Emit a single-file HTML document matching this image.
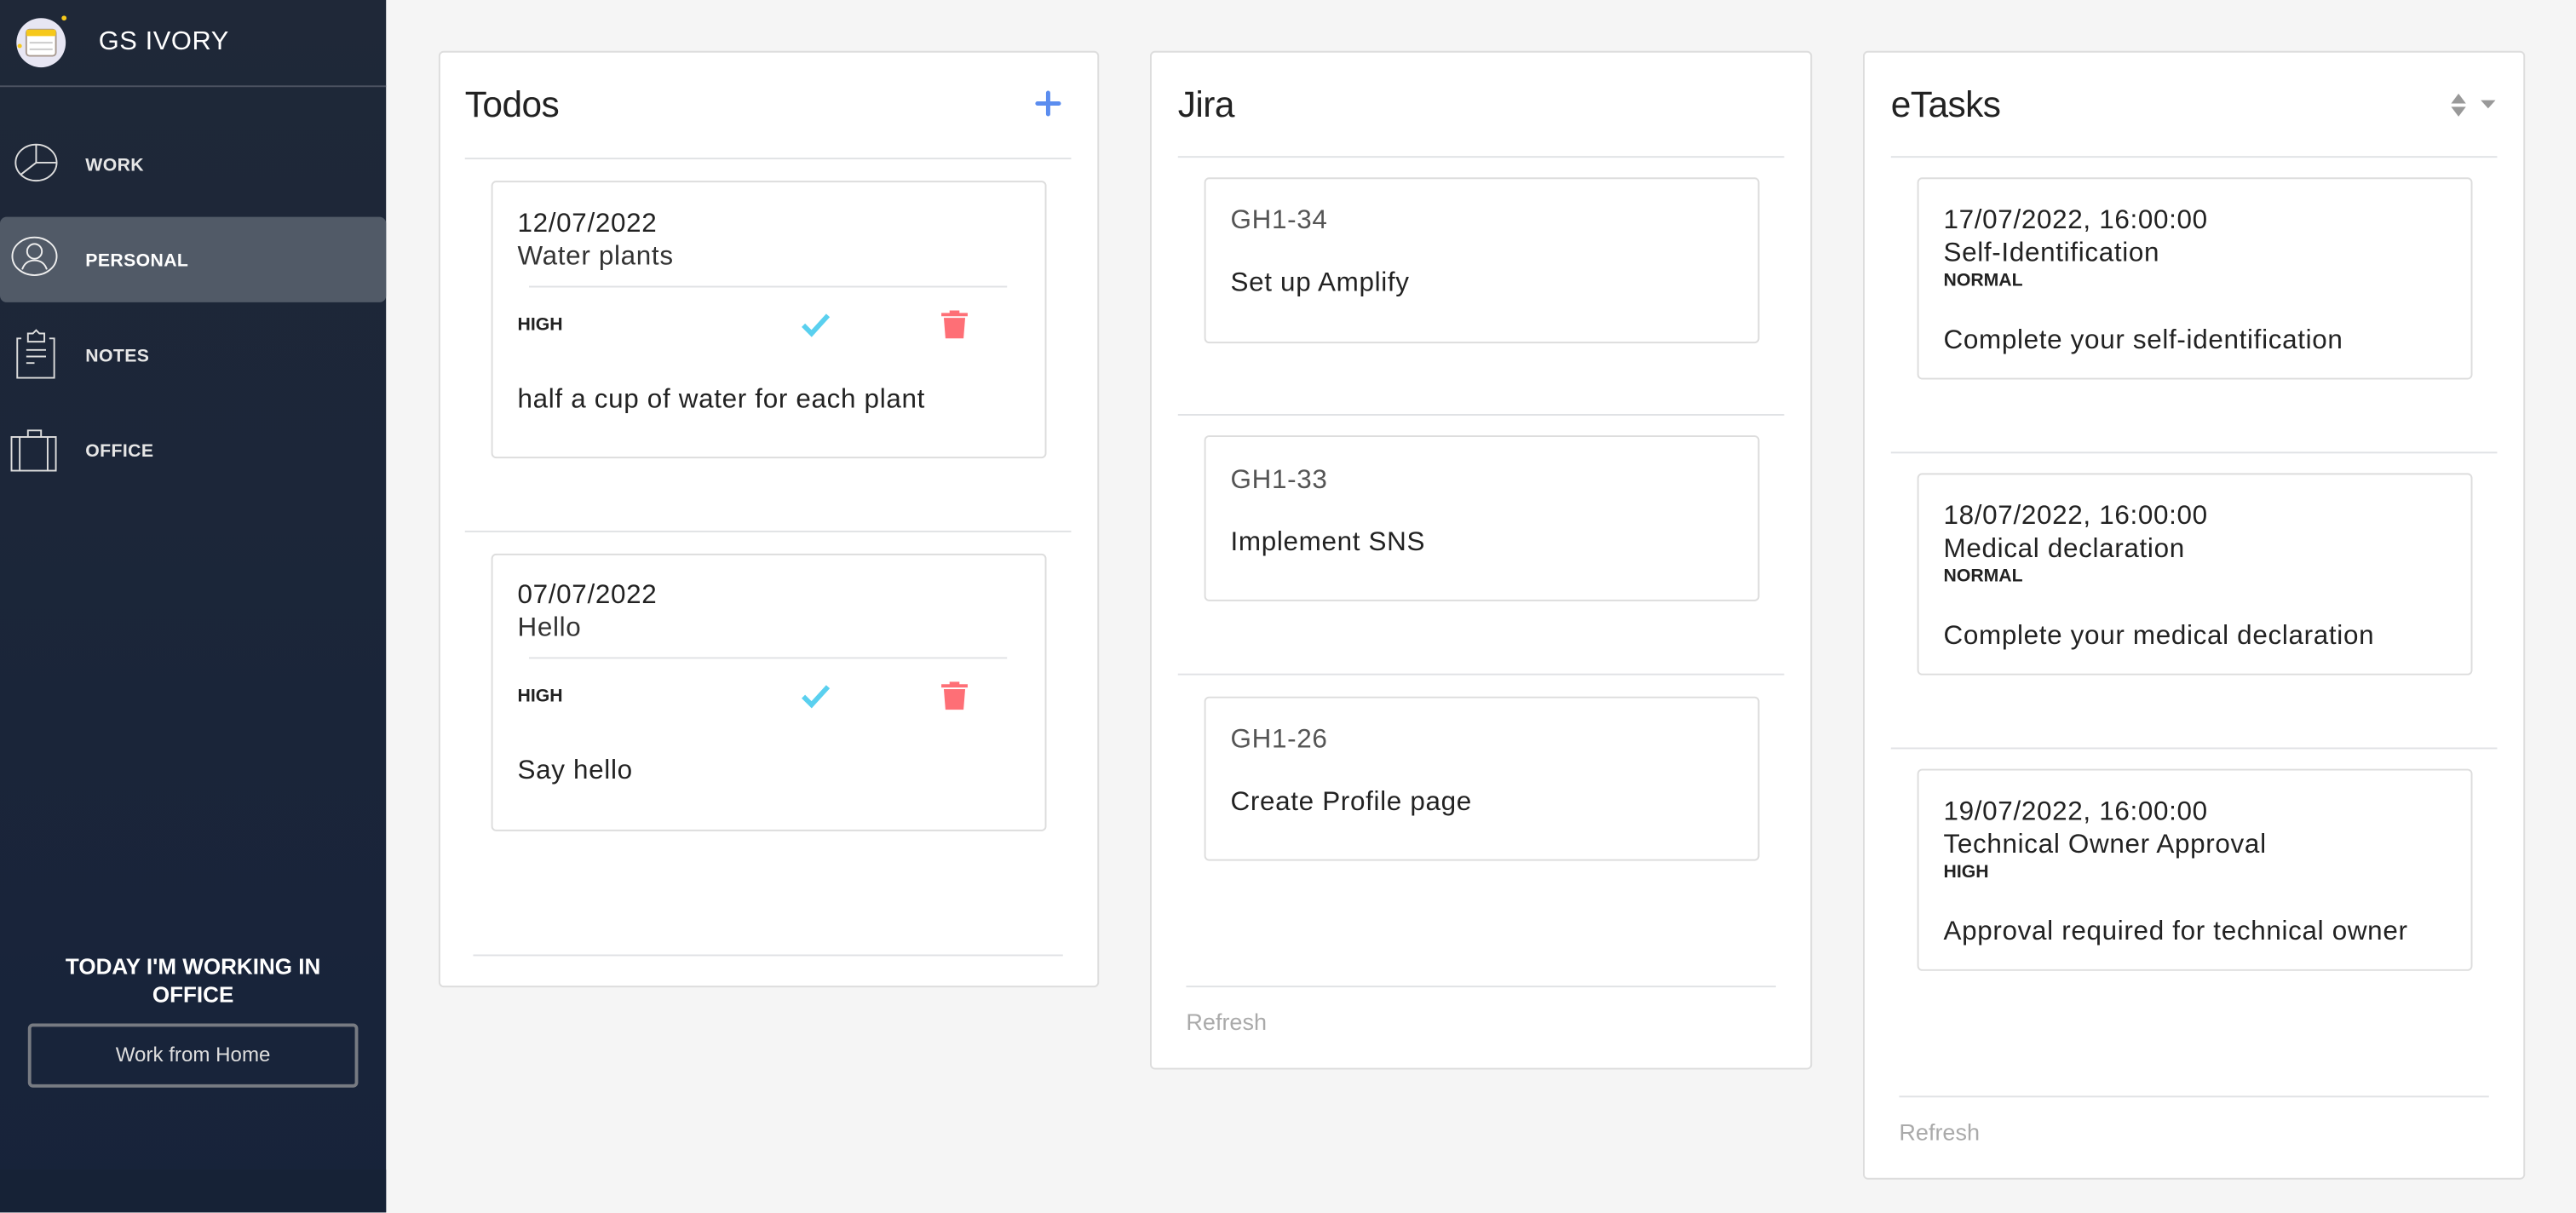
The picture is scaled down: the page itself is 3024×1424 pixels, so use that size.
<!DOCTYPE html>
<html><head><meta charset="utf-8"><style>
*{margin:0;padding:0;box-sizing:border-box}
html,body{width:3024px;height:1424px;overflow:hidden;background:#f5f5f5;font-family:"Liberation Sans",sans-serif}
#w{position:absolute;left:0;top:0;width:1568px;height:738px;transform:scale(1.92857);transform-origin:0 0}
.a{position:absolute}
.sb{left:0;top:0;width:235px;height:738px;background:linear-gradient(#1f2838,#17233a)}
.nav{left:52px;color:#e6e6e6;font-weight:bold;font-size:11px;letter-spacing:.2px}
.col{background:#fff;border:1px solid #ddd;border-radius:3px}
.tt{font-size:22px;color:#222;font-weight:300;letter-spacing:-.3px}
.hl{height:1px;background:#e0e2e5}
.card{background:#fff;border:1px solid #ddd;border-radius:3px}
.t16{font-size:16.3px;color:#222;letter-spacing:.35px;line-height:19px}
.lt{color:#333}
.b11{font-size:11px;font-weight:bold;color:#222}
.ref{font-size:14px;color:#aaa}
</style></head><body><div id="w">
<div class="a sb"></div>
<svg class="a" style="left:8px;top:8px" width="36" height="36" viewBox="0 0 36 36"><circle cx="17" cy="18" r="15" fill="#e7e6f3"/><rect x="8" y="10" width="18" height="16" rx="2" fill="#fff" stroke="#a89a90"/><rect x="8" y="10" width="18" height="4" rx="1" fill="#f6c81a"/><line x1="10" y1="18" x2="24" y2="18" stroke="#ccc"/><line x1="10" y1="22" x2="24" y2="22" stroke="#ccc"/><circle cx="31" cy="3" r="1.5" fill="#f6c81a"/><circle cx="4" cy="20" r="1.3" fill="#f6c81a"/></svg>
<div class="a" style="left:60px;top:17px;color:#fff;font-size:16px;letter-spacing:.3px">GS IVORY</div>
<div class="a" style="left:0;top:52px;width:235px;height:1px;background:#4c5361"></div>
<svg class="a" style="left:7px;top:84px" width="30" height="30" viewBox="0 0 30 30" fill="none" stroke="#ddd" stroke-width="1"><ellipse cx="15" cy="15" rx="12.5" ry="11"/><path d="M15 4V15H27M15 15L6 22"/></svg>
<div class="a nav" style="top:95px">WORK</div>
<div class="a" style="left:0;top:132px;width:235px;height:52px;background:#515a67;border-radius:4px"></div>
<svg class="a" style="left:6px;top:141px" width="30" height="30" viewBox="0 0 30 30" fill="none" stroke="#eee" stroke-width="1"><ellipse cx="15" cy="15" rx="13.5" ry="11.5"/><circle cx="15" cy="12" r="4.5"/><path d="M7.5 23C9 18.5 12 17.5 15 17.5S21 18.5 22.5 23"/></svg>
<div class="a nav" style="top:153px;color:#fff">PERSONAL</div>
<svg class="a" style="left:9px;top:199px" width="26" height="32" viewBox="0 0 26 32" fill="none" stroke="#ddd" stroke-width="1"><path d="M4 7H1.5V31H24V7H21"/><path d="M8 9V4H11L13 2L15 4H18V9Z"/><path d="M7 14H19M7 18H19M7 22H12"/></svg>
<div class="a nav" style="top:211px">NOTES</div>
<svg class="a" style="left:6px;top:259px" width="30" height="30" viewBox="0 0 30 30" fill="none" stroke="#ddd" stroke-width="1"><rect x="1" y="7" width="27" height="20.5"/><path d="M11 7V3H19V7M6 7V27.5M23 7V27.5"/></svg>
<div class="a nav" style="top:269px">OFFICE</div>
<div class="a" style="left:0;top:580px;width:235px;text-align:center;color:#fff;font-weight:bold;font-size:13.5px;line-height:17px">TODAY I'M WORKING IN<br>OFFICE</div>
<div class="a" style="left:17px;top:623px;width:201px;height:39px;border:2px solid #777b82;border-radius:3px;color:#ddd;font-size:12.5px;text-align:center;line-height:35px">Work from Home</div>
<div class="a" style="left:0;top:712px;width:235px;height:26px;background:#162236"></div>

<!-- Todos -->
<div class="a col" style="left:267px;top:31px;width:402px;height:570px"></div>
<div class="a tt" style="left:283px;top:51px">Todos</div>
<svg class="a" style="left:630px;top:55px" width="16" height="16" viewBox="0 0 16 16"><path d="M8 1.5V14.5M1.5 8H14.5" stroke="#5b8def" stroke-width="2.6" stroke-linecap="round"/></svg>
<div class="a hl" style="left:283px;top:96px;width:369px"></div>
<div class="a card" style="left:299px;top:110px;width:338px;height:169px"></div>
<div class="a t16" style="left:315px;top:127px">12/07/2022</div>
<div class="a t16 lt" style="left:315px;top:147px;font-weight:300">Water plants</div>
<div class="a hl" style="left:322px;top:174px;width:291px"></div>
<div class="a b11" style="left:315px;top:192px">HIGH</div>
<svg class="a" style="left:487px;top:189px" width="20" height="17" viewBox="0 0 20 17"><path d="M2 9L7 14L17 3" fill="none" stroke="#5ad0ef" stroke-width="3"/></svg>
<svg class="a" style="left:572px;top:188px" width="18" height="19" viewBox="0 0 18 19"><path d="M6 1H12V2.5H17V4.5H1V2.5H6Z" fill="#fe6f76"/><path d="M2.5 5.5H15.5L14.5 18H3.5Z" fill="#fe6f76"/></svg>
<div class="a t16" style="left:315px;top:234px">half a cup of water for each plant</div>
<div class="a hl" style="left:283px;top:323px;width:369px"></div>
<div class="a card" style="left:299px;top:337px;width:338px;height:169px"></div>
<div class="a t16" style="left:315px;top:353px">07/07/2022</div>
<div class="a t16 lt" style="left:315px;top:373px;font-weight:300">Hello</div>
<div class="a hl" style="left:322px;top:400px;width:291px"></div>
<div class="a b11" style="left:315px;top:418px">HIGH</div>
<svg class="a" style="left:487px;top:415px" width="20" height="17" viewBox="0 0 20 17"><path d="M2 9L7 14L17 3" fill="none" stroke="#5ad0ef" stroke-width="3"/></svg>
<svg class="a" style="left:572px;top:414px" width="18" height="19" viewBox="0 0 18 19"><path d="M6 1H12V2.5H17V4.5H1V2.5H6Z" fill="#fe6f76"/><path d="M2.5 5.5H15.5L14.5 18H3.5Z" fill="#fe6f76"/></svg>
<div class="a t16" style="left:315px;top:460px">Say hello</div>
<div class="a hl" style="left:288px;top:581px;width:359px"></div>

<!-- Jira -->
<div class="a col" style="left:700px;top:31px;width:403px;height:620px"></div>
<div class="a tt" style="left:717px;top:51px">Jira</div>
<div class="a hl" style="left:717px;top:95px;width:369px"></div>
<div class="a card" style="left:733px;top:108px;width:338px;height:101px"></div>
<div class="a t16" style="left:749px;top:125px;color:#555;font-weight:300">GH1-34</div>
<div class="a t16" style="left:749px;top:163px">Set up Amplify</div>
<div class="a hl" style="left:717px;top:252px;width:369px"></div>
<div class="a card" style="left:733px;top:265px;width:338px;height:101px"></div>
<div class="a t16" style="left:749px;top:283px;color:#555;font-weight:300">GH1-33</div>
<div class="a t16" style="left:749px;top:321px">Implement SNS</div>
<div class="a hl" style="left:717px;top:410px;width:369px"></div>
<div class="a card" style="left:733px;top:424px;width:338px;height:100px"></div>
<div class="a t16" style="left:749px;top:441px;color:#555;font-weight:300">GH1-26</div>
<div class="a t16" style="left:749px;top:479px">Create Profile page</div>
<div class="a hl" style="left:722px;top:600px;width:359px"></div>
<div class="a ref" style="left:722px;top:614px">Refresh</div>

<!-- eTasks -->
<div class="a col" style="left:1134px;top:31px;width:403px;height:687px"></div>
<div class="a tt" style="left:1151px;top:51px">eTasks</div>
<svg class="a" style="left:1490px;top:56px" width="32" height="16" viewBox="0 0 32 16"><path d="M2 7L6.5 1L11 7Z M2 9L6.5 15L11 9Z" fill="#999"/><path d="M20 5H29L24.5 10Z" fill="#999"/></svg>
<div class="a hl" style="left:1151px;top:95px;width:369px"></div>
<div class="a card" style="left:1167px;top:108px;width:338px;height:123px"></div>
<div class="a t16" style="left:1183px;top:125px">17/07/2022, 16:00:00</div>
<div class="a t16" style="left:1183px;top:145px">Self-Identification</div>
<div class="a b11" style="left:1183px;top:165px">NORMAL</div>
<div class="a t16" style="left:1183px;top:198px">Complete your self-identification</div>
<div class="a hl" style="left:1151px;top:275px;width:369px"></div>
<div class="a card" style="left:1167px;top:288px;width:338px;height:123px"></div>
<div class="a t16" style="left:1183px;top:305px">18/07/2022, 16:00:00</div>
<div class="a t16" style="left:1183px;top:325px">Medical declaration</div>
<div class="a b11" style="left:1183px;top:345px">NORMAL</div>
<div class="a t16" style="left:1183px;top:378px">Complete your medical declaration</div>
<div class="a hl" style="left:1151px;top:455px;width:369px"></div>
<div class="a card" style="left:1167px;top:468px;width:338px;height:123px"></div>
<div class="a t16" style="left:1183px;top:485px">19/07/2022, 16:00:00</div>
<div class="a t16" style="left:1183px;top:505px">Technical Owner Approval</div>
<div class="a b11" style="left:1183px;top:525px">HIGH</div>
<div class="a t16" style="left:1183px;top:558px">Approval required for technical owner</div>
<div class="a hl" style="left:1156px;top:667px;width:359px"></div>
<div class="a ref" style="left:1156px;top:681px">Refresh</div>
</div></body></html>
